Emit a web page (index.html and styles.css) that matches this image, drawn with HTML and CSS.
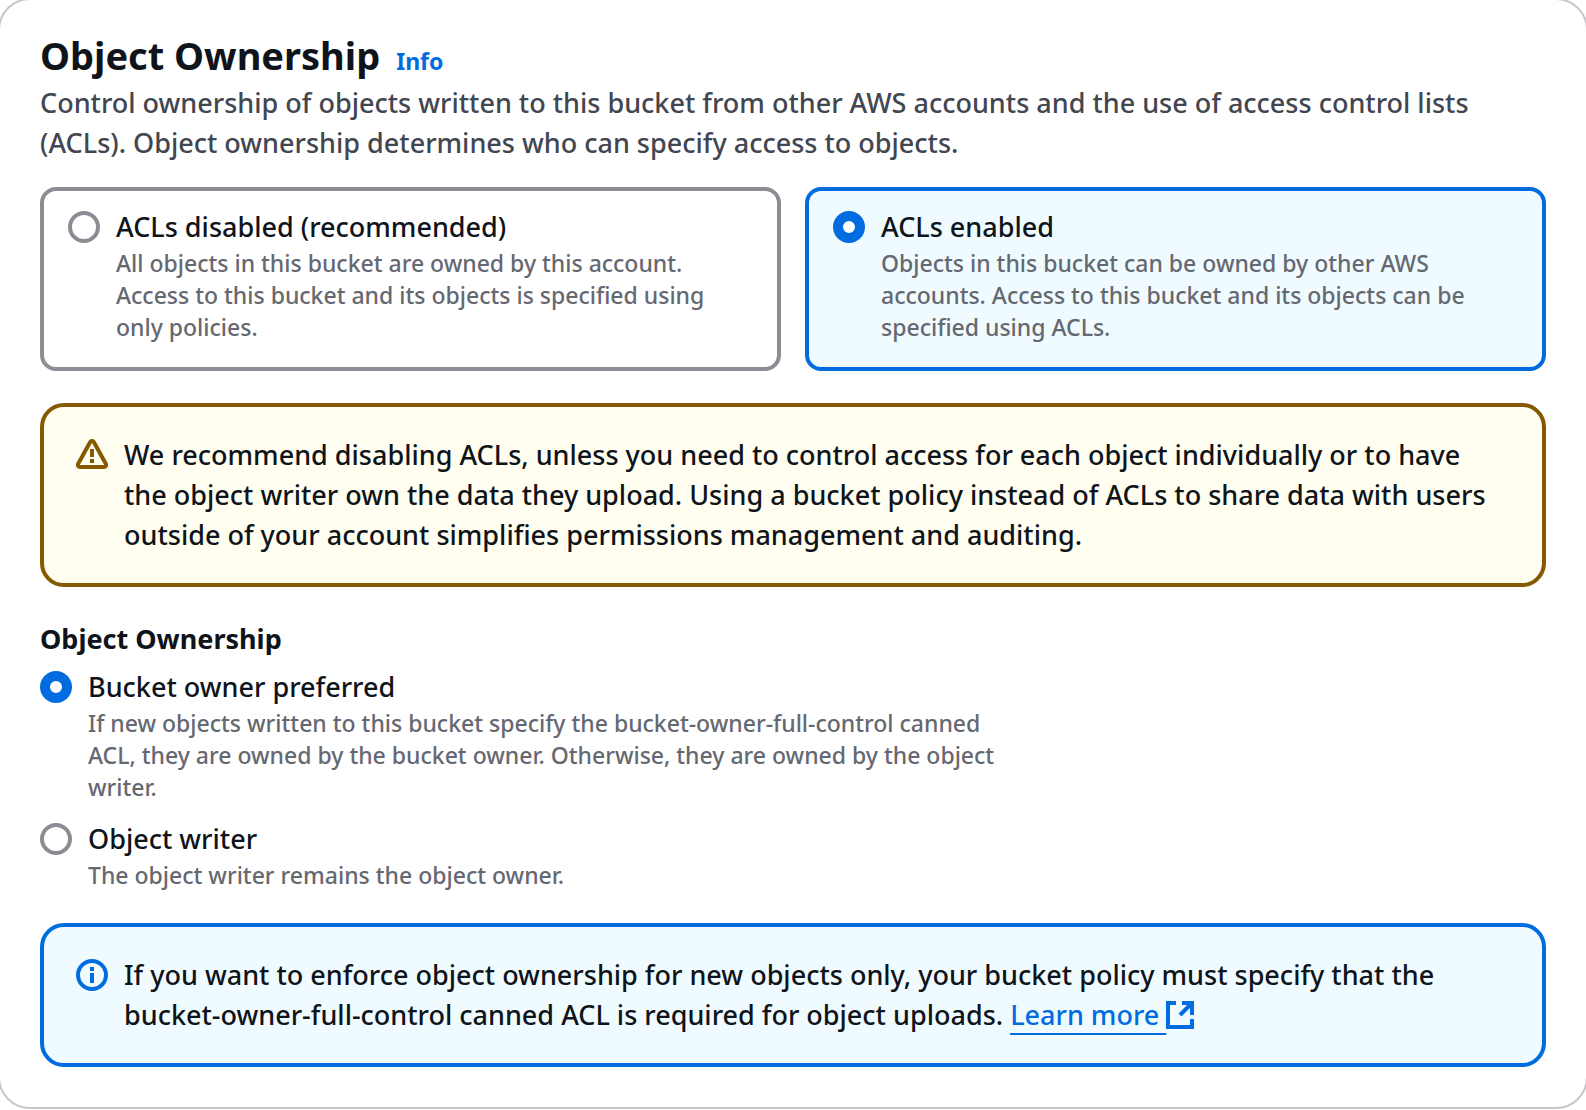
FILE: index.html
```html
<!DOCTYPE html>
<html lang="en">
<head>
<meta charset="utf-8">
<meta name="viewport" content="width=device-width, initial-scale=1">
<title>Object Ownership</title>
<link rel="stylesheet" href="styles.css">
</head>
<body>
<main class="container">
  <header class="header">
    <div class="title-row">
      <h1 class="title">Object Ownership</h1>
      <a class="info-link" href="#info">Info</a>
    </div>
    <p class="description">Control ownership of objects written to this bucket from other AWS accounts and the use of access control lists (ACLs). Object ownership determines who can specify access to objects.</p>
  </header>

  <div class="tiles" role="radiogroup" aria-label="ACL setting">
    <label class="tile" for="acl-disabled">
      <input class="radio" type="radio" name="acl" id="acl-disabled">
      <span class="option-text">
        <span class="option-label">ACLs disabled (recommended)</span>
        <span class="option-note">All objects in this bucket are owned by this account. Access to this bucket and its objects is specified using only policies.</span>
      </span>
    </label>
    <label class="tile tile-selected" for="acl-enabled">
      <input class="radio" type="radio" name="acl" id="acl-enabled" checked>
      <span class="option-text">
        <span class="option-label">ACLs enabled</span>
        <span class="option-note">Objects in this bucket can be owned by other AWS accounts. Access to this bucket and its objects can be specified using ACLs.</span>
      </span>
    </label>
  </div>

  <div class="alert alert-warning">
    <svg class="alert-icon" viewBox="0 0 16 16" aria-hidden="true">
      <path d="M8 5v4M8 10v2" />
      <path stroke-linejoin="round" d="m8.9 1.5 6 10.9c.4.7-.1 1.6-.9 1.6H2c-.8 0-1.300-.9-.9-1.600l6-10.900c.4-.7 1.400-.7 1.800 0Z" />
    </svg>
    <p class="alert-text">We recommend disabling ACLs, unless you need to control access for each object individually or to have the object writer own the data they upload. Using a bucket policy instead of ACLs to share data with users outside of your account simplifies permissions management and auditing.</p>
  </div>

  <fieldset class="field">
    <legend class="field-label">Object Ownership</legend>
    <div class="options">
      <label class="option" for="owner-preferred">
        <input class="radio" type="radio" name="ownership" id="owner-preferred" checked>
        <span class="option-text">
          <span class="option-label">Bucket owner preferred</span>
          <span class="option-note">If new objects written to this bucket specify the bucket-owner-full-control canned ACL, they are owned by the bucket owner. Otherwise, they are owned by the object writer.</span>
        </span>
      </label>
      <label class="option" for="object-writer">
        <input class="radio" type="radio" name="ownership" id="object-writer">
        <span class="option-text">
          <span class="option-label">Object writer</span>
          <span class="option-note">The object writer remains the object owner.</span>
        </span>
      </label>
    </div>
  </fieldset>

  <div class="alert alert-info">
    <svg class="alert-icon" viewBox="0 0 16 16" aria-hidden="true">
      <circle cx="8" cy="8" r="7" />
      <path d="M8 12V7M8 6V4" />
    </svg>
    <p class="alert-text">If you want to enforce object ownership for new objects only, your bucket policy must specify that the bucket-owner-full-control canned ACL is required for object uploads. <a class="link" href="#learn-more">Learn more <svg class="external-icon" viewBox="0 0 28 28" aria-hidden="true"><path d="M10 2H2v24h24v-8M16 2h10v12M25 3 14 14" /></svg></a></p>
  </div>
</main>
</body>
</html>
```

FILE: styles.css
```css
* {
  box-sizing: border-box;
}

body {
  margin: 0;
  background: #fff;
  color: #0f141a;
  font: 500 27px/40px "Noto Sans", sans-serif;
  overflow-x: hidden;
}

h1,
p {
  margin: 0;
}

/* The outer border runs just past the window on three sides */
.container {
  display: flex;
  flex-direction: column;
  gap: 32px;
  margin: -2px -2px 0;
  padding: 31px 40px 40px;
  border: 2px solid #c6c6cd;
  border-radius: 32px;
}

.header {
  margin-bottom: -8px;
}

.title-row {
  display: flex;
  align-items: baseline;
  gap: 16px;
  margin-bottom: 4px;
}

.title {
  font-size: 38px;
  font-weight: 700;
  line-height: 48px;
}

.info-link {
  color: #006ce0;
  font-size: 23px;
  font-weight: 700;
  line-height: 32px;
  text-decoration: none;
}

.description {
  color: #424650;
}

.tiles {
  display: grid;
  grid-template-columns: 1fr 1fr;
  gap: 24px;
}

.tile,
.option {
  display: flex;
  gap: 16px;
}

.tile {
  padding: 16px 24px 24px;
  border: 4px solid #8c8c94;
  border-radius: 16px;
}

.tile-selected {
  border-color: #006ce0;
  background: #f0fbff;
}

.radio {
  appearance: none;
  flex: none;
  width: 32px;
  height: 32px;
  margin: 4px 0 0;
  border: 4px solid #8c8c94;
  border-radius: 50%;
  background: #fff;
}

.radio:checked {
  border: 10px solid #006ce0;
}

.option-text {
  display: flex;
  flex-direction: column;
}

.option-note {
  color: #656871;
  font-size: 23px;
  line-height: 32px;
}

.alert {
  display: flex;
  gap: 16px;
  padding: 28px 32px;
  border: 4px solid;
  border-radius: 24px;
}

.alert-warning {
  border-color: #855900;
  background: #fffef0;
}

.alert-info {
  border-color: #006ce0;
  background: #f0fbff;
}

.alert-icon {
  flex: none;
  width: 32px;
  height: 32px;
  margin-top: 4px;
  fill: none;
  stroke-width: 2;
}

.alert-warning .alert-icon {
  stroke: #855900;
}

.alert-info .alert-icon,
.external-icon {
  stroke: #006ce0;
}

.field {
  min-width: 0;
  margin: 0;
  padding: 0;
  border: 0;
}

.field-label {
  margin-bottom: 8px;
  padding: 0;
  font-weight: 700;
}

.options {
  display: flex;
  flex-direction: column;
  gap: 16px;
  max-width: 988px;
}

.link {
  color: #006ce0;
  text-decoration: underline;
  text-decoration-thickness: 2px;
  text-underline-offset: 8px;
}

.external-icon {
  width: 28px;
  height: 28px;
  fill: none;
  stroke-width: 4;
  vertical-align: -4px;
}
```
